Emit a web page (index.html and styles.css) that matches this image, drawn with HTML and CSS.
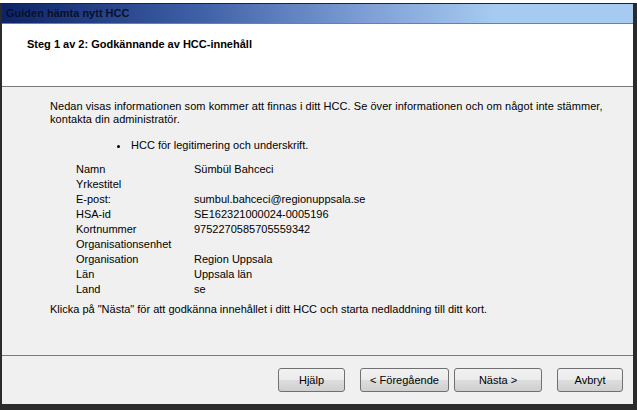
FILE: index.html
```html
<!DOCTYPE html>
<html>
<head>
    <title>Guiden hämta nytt HCC</title>
    <link rel="stylesheet" href="styles.css">
</head>
<body>
    <div class="wizard">
        <div class="title-bar">Guiden hämta nytt HCC</div>

        <div class="step-header">
            <h2>Steg 1 av 2: Godkännande av HCC-innehåll</h2>
        </div>

        <div class="step-body">
            <p class="intro">Nedan visas informationen som kommer att finnas i ditt HCC. Se över informationen och om något inte stämmer, kontakta din administratör.</p>

            <ul class="cert-list">
                <li>HCC för legitimering och underskrift.</li>
            </ul>

            <!-- Card content -->
            <div class="card-info">
                <span>Namn</span><span>Sümbül Bahceci</span>
                <span>Yrkestitel</span><span></span>
                <span>E-post:</span><span>sumbul.bahceci@regionuppsala.se</span>
                <span>HSA-id</span><span>SE162321000024-0005196</span>
                <span>Kortnummer</span><span>9752270585705559342</span>
                <span>Organisationsenhet</span><span></span>
                <span>Organisation</span><span>Region Uppsala</span>
                <span>Län</span><span>Uppsala län</span>
                <span>Land</span><span>se</span>
            </div>

            <p class="next-hint">Klicka på "Nästa" för att godkänna innehållet i ditt HCC och starta nedladdning till ditt kort.</p>
        </div>

        <div class="button-row">
            <button class="btn">Hjälp</button>
            <button class="btn btn-wide gap-left">&lt; Föregående</button>
            <button class="btn btn-next">Nästa &gt;</button>
            <button class="btn btn-cancel gap-left">Avbryt</button>
        </div>
    </div>
</body>
</html>
```

FILE: styles.css
```css
body {
    margin: 0;
    background-color: #fff;
    font-family: "Liberation Sans", Arial, sans-serif;
    font-size: 11px;
    color: #000;
}
.wizard {
    margin-top: 3px;
    width: 631px;
    height: 400px;
    border-top: 1px solid #222;
    border-left: 2px solid #2b2b2b;
    border-right: 4px solid #2b2b2b;
    border-bottom: 6px solid #2b2b2b;
    display: flex;
    flex-direction: column;
    background-color: #f0f0f0;
}
.title-bar {
    height: 19px;
    line-height: 19px;
    padding-left: 4px;
    font-weight: bold;
    color: #0b0f2a;
    background: linear-gradient(to right, #0c2467 0%, #3d5da4 30%, #7f9fd6 58%, #a6caf0 78%, #a6caf0 100%);
    border-bottom: 1px solid #6b7fa8;
}
.step-header {
    height: 62px;
    background-color: #fff;
    border-bottom: 1px solid #7a7a7a;
}
.step-header h2 {
    margin: 14px 0 0 25px;
    font-size: 11px;
    line-height: 13px;
    font-weight: bold;
}
.step-body {
    flex: 1;
    padding: 13px 20px 0 48px;
    border-bottom: 1px solid #7a7a7a;
}
.intro {
    margin: 0;
    line-height: 13px;
    letter-spacing: 0.05px;
}
.cert-list {
    margin: 13px 0 0 0;
    padding-left: 80px;
    line-height: 13px;
}
.cert-list li {
    padding-left: 1px;
}
.card-info {
    margin: 10px 0 0 26px;
    display: grid;
    grid-template-columns: 118px auto;
    grid-auto-rows: 15px;
    line-height: 15px;
}
.next-hint {
    margin: 6px 0 0 0;
    line-height: 13px;
}
.button-row {
    height: 48px;
    display: flex;
    justify-content: flex-end;
    align-items: flex-start;
    gap: 5px;
    padding: 12px 10px 0 0;
    box-sizing: border-box;
}
.btn {
    width: 67px;
    height: 24px;
    font-family: "Liberation Sans", Arial, sans-serif;
    font-size: 11px;
    color: #000;
    border: 1px solid #707070;
    border-radius: 3px;
    background: linear-gradient(#f2f2f2 0%, #ebebeb 50%, #dddddd 51%, #cfcfcf 100%);
    padding: 0;
}
.btn-wide {
    width: 89px;
}
.btn-next {
    width: 88px;
}
.btn-cancel {
    width: 66px;
}
.gap-left {
    margin-left: 10px;
}
```
